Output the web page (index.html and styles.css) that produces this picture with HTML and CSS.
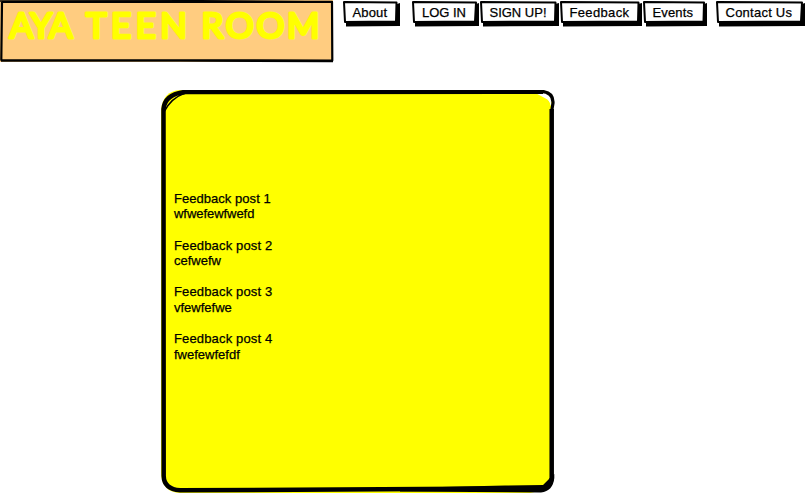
FILE: index.html
```html
<!DOCTYPE html>
<html lang="en">
<head>
<meta charset="utf-8">
<title>AYA Teen Room</title>
<link rel="stylesheet" href="styles.css">
</head>
<body>
<header class="header">
  <h1 class="brand">
    <svg width="335" height="63" viewBox="0 0 335 63">
      <path class="brand-fill" d="M0 0H333V62H0Z"/>
      <path class="brand-line" d="M1.500 2L332 1.800L332.300 60.500L1.300 60L2 2"/>
      <path class="thin" d="M0 1L200 .8L333 2M1 61L180 60.800L333 61.500"/>
      <text class="brand-text" y="37.500"><tspan x="9.500" textLength="62">AYA</tspan> <tspan x="86" textLength="101">TEEN</tspan> <tspan x="201.500" textLength="118">ROOM</tspan></text>
    </svg>
  </h1>
  <nav class="nav">
    <a class="tab tab-about"><svg width="57" height="28"><path class="shadow" d="M3 22L54 21V4L57 3V26L3 26.5Z"/><path class="face" d="M1 2L53.5 2.5L53 21.5L2 22Z"/><text x="9.5" y="17.3" textLength="34.5">About</text></svg></a>
    <a class="tab tab-login"><svg width="67" height="28"><path class="shadow" d="M3 22L64 21V4L67 3V26L3 26.5Z"/><path class="face" d="M1 2L64 2.5L63 21.5L2 22Z"/><text x="10" y="17.3" textLength="44">LOG IN</text></svg></a>
    <a class="tab tab-signup"><svg width="79" height="28"><path class="shadow" d="M3 22L75 21V4L79 3V26L3 26.5Z"/><path class="face" d="M1 2L75.5 2.5L75 21.5L2 22Z"/><text x="9.5" y="17.3" textLength="57">SIGN UP!</text></svg></a>
    <a class="tab tab-feedback"><svg width="82" height="28"><path class="shadow" d="M3 22L78 21V4L82 3V26L3 26.5Z"/><path class="face" d="M1 2L78.5 2.5L78 21.5L2 22Z"/><text x="9.5" y="17.3" textLength="59.5">Feedback</text></svg></a>
    <a class="tab tab-events"><svg width="64" height="28"><path class="shadow" d="M3 22L61 21V4L64 3V26L3 26.5Z"/><path class="face" d="M1 2L61 2.5L60.5 21.5L2 22Z"/><text x="9.5" y="17.3" textLength="40.5">Events</text></svg></a>
    <a class="tab tab-contact"><svg width="89" height="28"><path class="shadow" d="M3 22L86 21V4L89 3V26L3 26.5Z"/><path class="face" d="M1 2L86 2.5L85 21.5L2 22Z"/><text x="9.5" y="17.3" textLength="66.5">Contact Us</text></svg></a>
  </nav>
</header>
<main class="panel">
  <svg class="frame" width="395" height="403" viewBox="160 90 395 403">
    <path class="panel-fill" d="M180 90H530L552 102V480L544 490L530 493H180Q161 492 161 472V110Q163 91 180 90Z"/>
    <path class="corner" d="M542 94Q550 95 551.500 106Q549 98 542 94ZM165 480Q168 489 177 489Q168 486 165 480Z"/>
    <path class="panel-line" d="M183 92L543 91.700"/>
    <path class="panel-bend" d="M541 91.300Q553.500 92 553 103L551.500 112"/>
    <path class="panel-line" d="M551.700 109L551.700 478Q550 488 541 488.300L180 490.300Q164 489 163.700 476L163.500 109Q165 94 185 92"/>
    <path class="thin" d="M164 112Q171 98 185 93"/>
    <path class="corner-shadow" d="M554.300 474V478Q553 491 541 492.500L400 491.500V488L505 485.500L543 485L550 478Z"/>
  </svg>
  <div class="posts">
    <p><span class="title-1">Feedback post 1</span><br><span class="body-1">wfwefewfwefd</span></p>
    <p><span class="title">Feedback post 2</span><br>cefwefw</p>
    <p><span class="title">Feedback post 3</span><br>vfewfefwe</p>
    <p><span class="title">Feedback post 4</span><br>fwefewfefdf</p>
  </div>
</main>
</body>
</html>
```
FILE: styles.css
```css
body {
  margin: 0;
  width: 805px;
  height: 493px;
  overflow: hidden;
  background: #fff;
  color: #000;
  font: 13px/15.6px "Liberation Sans", sans-serif;
}
svg { display: block; }
.header { display: flex; height: 63px; }
.brand { margin: 0; width: 335px; flex: none; }
.brand-fill { fill: #ffcc80; }
.brand-line { fill: none; stroke: #000; stroke-width: 2.2; stroke-linejoin: round; }
.brand-text {
  font: 400 35px Lato, sans-serif;
  fill: #ff0;
  stroke: #ff0;
  stroke-width: 3.2;
  stroke-linejoin: round;
}
.thin { fill: none; stroke: #000; stroke-width: 1.5; }
.nav { display: flex; align-items: flex-start; margin-left: 8px; }
.tab { flex: none; }
.tab-login { margin-left: 12px; }
.tab-signup,
.tab-feedback,
.tab-events { margin-left: 1px; }
.tab-contact { margin-left: 9px; }
.tab text { fill: #000; stroke: #000; stroke-width: .25; }
.face { fill: #fff; stroke: #000; stroke-width: 2; stroke-linejoin: round; }
.shadow { fill: #000; }
.panel {
  display: grid;
  width: 395px;
  height: 403px;
  margin: 27px 0 0 160px;
}
.frame, .posts { grid-area: 1 / 1; }
.panel-fill { fill: #ff0; }
.panel-line { fill: none; stroke: #000; stroke-width: 4.5; }
.panel-bend { fill: none; stroke: #000; stroke-width: 3.2; }
.corner { fill: #fff; stroke: #fff; }
.corner-shadow { fill: #000; }
.posts { padding: 100.8px 0 0 14px; -webkit-text-stroke: .25px #000; z-index: 1; }
.posts p { margin: 0 0 15.6px; white-space: nowrap; }
.title, .title-1 { letter-spacing: .15px; }
.title-1 { letter-spacing: .04px; }
.body-1 { letter-spacing: -.05px; }
```
